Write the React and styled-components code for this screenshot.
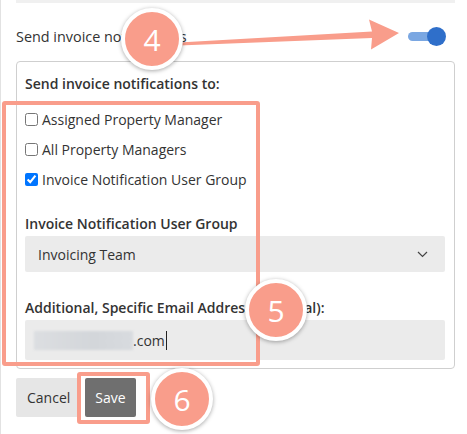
import React from 'react';
import styled, { createGlobalStyle } from 'styled-components';

const Global = createGlobalStyle`
  html, body { margin: 0; padding: 0; background: #fff; }
  body { font-family: "Open Sans", "Noto Sans", sans-serif; color: #333; font-size: 14px; }
  * { box-sizing: border-box; }
`;

const SALMON = '#f99d8b';

const Page = styled.div`
  position: relative;
  width: 467px;
  height: 434px;
  padding: 0 12px 0 15px;
  border-left: 1px solid #e2e2e2;
  overflow: hidden;
`;

const TopStrip = styled.div`
  height: 3px;
  background: #f0f0f0;
`;

const ToggleRow = styled.div`
  display: flex;
  align-items: center;
  justify-content: space-between;
  height: 40px;
  margin-top: 13px;
  padding-right: 9px;
`;

const RowLabel = styled.span`
  font-size: 14.4px;
  color: #333;
`;

const Switch = styled.div`
  position: relative;
  width: 38px;
  height: 19px;
`;

const Track = styled.div`
  position: absolute;
  left: 0;
  top: 5px;
  width: 30px;
  height: 9px;
  border-radius: 5px;
  background: #7aa7e2;
`;

const Knob = styled.div`
  position: absolute;
  right: 0;
  top: 0;
  width: 19px;
  height: 19px;
  border-radius: 50%;
  background: #2f6fca;
`;

const Panel = styled.div`
  margin-top: 5px;
  border: 1px solid #cfcfcf;
  border-radius: 4px;
  padding: 12px 9px 8px 8px;
`;

const Heading = styled.div`
  font-weight: 600;
  line-height: 20px;
  color: #333;
`;

const CheckList = styled.div`
  margin-top: 10px;
  display: flex;
  flex-direction: column;
`;

const CheckRow = styled.label`
  display: flex;
  align-items: center;
  height: 30px;
  color: #333;
  input {
    margin: 0 4px 0 0;
    width: 13px;
    height: 13px;
  }
`;

const FieldLabel = styled.div`
  font-weight: 600;
  line-height: 20px;
  margin-top: ${p => p.$gap}px;
  color: #333;
`;

const SelectBox = styled.div`
  margin-top: 2px;
  height: 36px;
  background: #ebebeb;
  border-radius: 2px;
  display: flex;
  align-items: center;
  justify-content: space-between;
  padding: 0 17px 0 13px;
  font-size: 14px;
  color: #333;
`;

const InputBox = styled.div`
  margin-top: 2px;
  height: 40px;
  background: #ebebeb;
  border-radius: 2px;
  display: flex;
  align-items: center;
  padding-left: 9px;
  color: #333;
`;

const Blurred = styled.div`
  width: 99px;
  height: 19px;
  background: linear-gradient(90deg, #dcdee1, #d3d6da 60%, #d8dbdf);
  filter: blur(0.8px);
`;

const Caret = styled.span`
  display: inline-block;
  width: 1px;
  height: 19px;
  background: #222;
  margin-left: 1px;
`;

const ButtonRow = styled.div`
  display: flex;
  gap: 4px;
  margin-top: 9px;
`;

const Button = styled.div`
  height: 39px;
  display: flex;
  align-items: center;
  justify-content: center;
  padding: 0 ${p => p.$pad}px;
  border-radius: 2px;
  background: ${p => (p.$primary ? '#6f6f6f' : '#e6e6e6')};
  color: ${p => (p.$primary ? '#fff' : '#333')};
  font-size: 14px;
`;

const Frame = styled.div`
  position: absolute;
  left: ${p => p.$x}px;
  top: ${p => p.$y}px;
  width: ${p => p.$w}px;
  height: ${p => p.$h}px;
  border: 4px solid ${SALMON};
  border-radius: 3px;
  pointer-events: none;
`;

const Badge = styled.div`
  position: absolute;
  left: ${p => p.$x - 31}px;
  top: ${p => p.$y - 31}px;
  width: 62px;
  height: 62px;
  border-radius: 50%;
  background: ${SALMON};
  border: 4px solid #fff;
  box-shadow: 0 1px 4px rgba(0, 0, 0, 0.35);
  display: flex;
  align-items: center;
  justify-content: center;
  color: #fff;
  font-size: 30px;
  font-family: "Open Sans", sans-serif;
  pointer-events: none;
`;

const ArrowSvg = styled.svg`
  position: absolute;
  left: 0;
  top: 0;
  pointer-events: none;
`;

export default function App() {
  return (
    <>
      <Global />
      <Page>
        <TopStrip />
        <ToggleRow>
          <RowLabel>Send invoice notifications</RowLabel>
          <Switch>
            <Track />
            <Knob />
          </Switch>
        </ToggleRow>
        <Panel>
          <Heading>Send invoice notifications to:</Heading>
          <CheckList>
            <CheckRow><input type="checkbox" />Assigned Property Manager</CheckRow>
            <CheckRow><input type="checkbox" />All Property Managers</CheckRow>
            <CheckRow><input type="checkbox" defaultChecked />Invoice Notification User Group</CheckRow>
          </CheckList>
          <FieldLabel $gap={20}>Invoice Notification User Group</FieldLabel>
          <SelectBox>
            <span>Invoicing Team</span>
            <svg width="11" height="7" viewBox="0 0 11 7">
              <path d="M1 1 L5.5 5.5 L10 1" fill="none" stroke="#444" strokeWidth="1.2" />
            </svg>
          </SelectBox>
          <FieldLabel $gap={26}>Additional, Specific Email Address (optional):</FieldLabel>
          <InputBox>
            <Blurred />
            <span>.com</span>
            <Caret />
          </InputBox>
        </Panel>
        <ButtonRow>
          <Button $pad={11}>Cancel</Button>
          <Button $primary $pad={10}>Save</Button>
        </ButtonRow>

        <ArrowSvg width="467" height="434">
          <polygon
            points="178,42.5 371,31.5 368,19.5 398,33 370,49.5 371,38 178,45.5"
            fill={SALMON}
          />
        </ArrowSvg>
        <Frame $x={1} $y={101} $w={258} $h={265} />
        <Frame $x={76} $y={372} $w={73} $h={52} />
        <Badge $x={151} $y={39}>4</Badge>
        <Badge $x={275} $y={310}>5</Badge>
        <Badge $x={181} $y={399}>6</Badge>
      </Page>
    </>
  );
}
